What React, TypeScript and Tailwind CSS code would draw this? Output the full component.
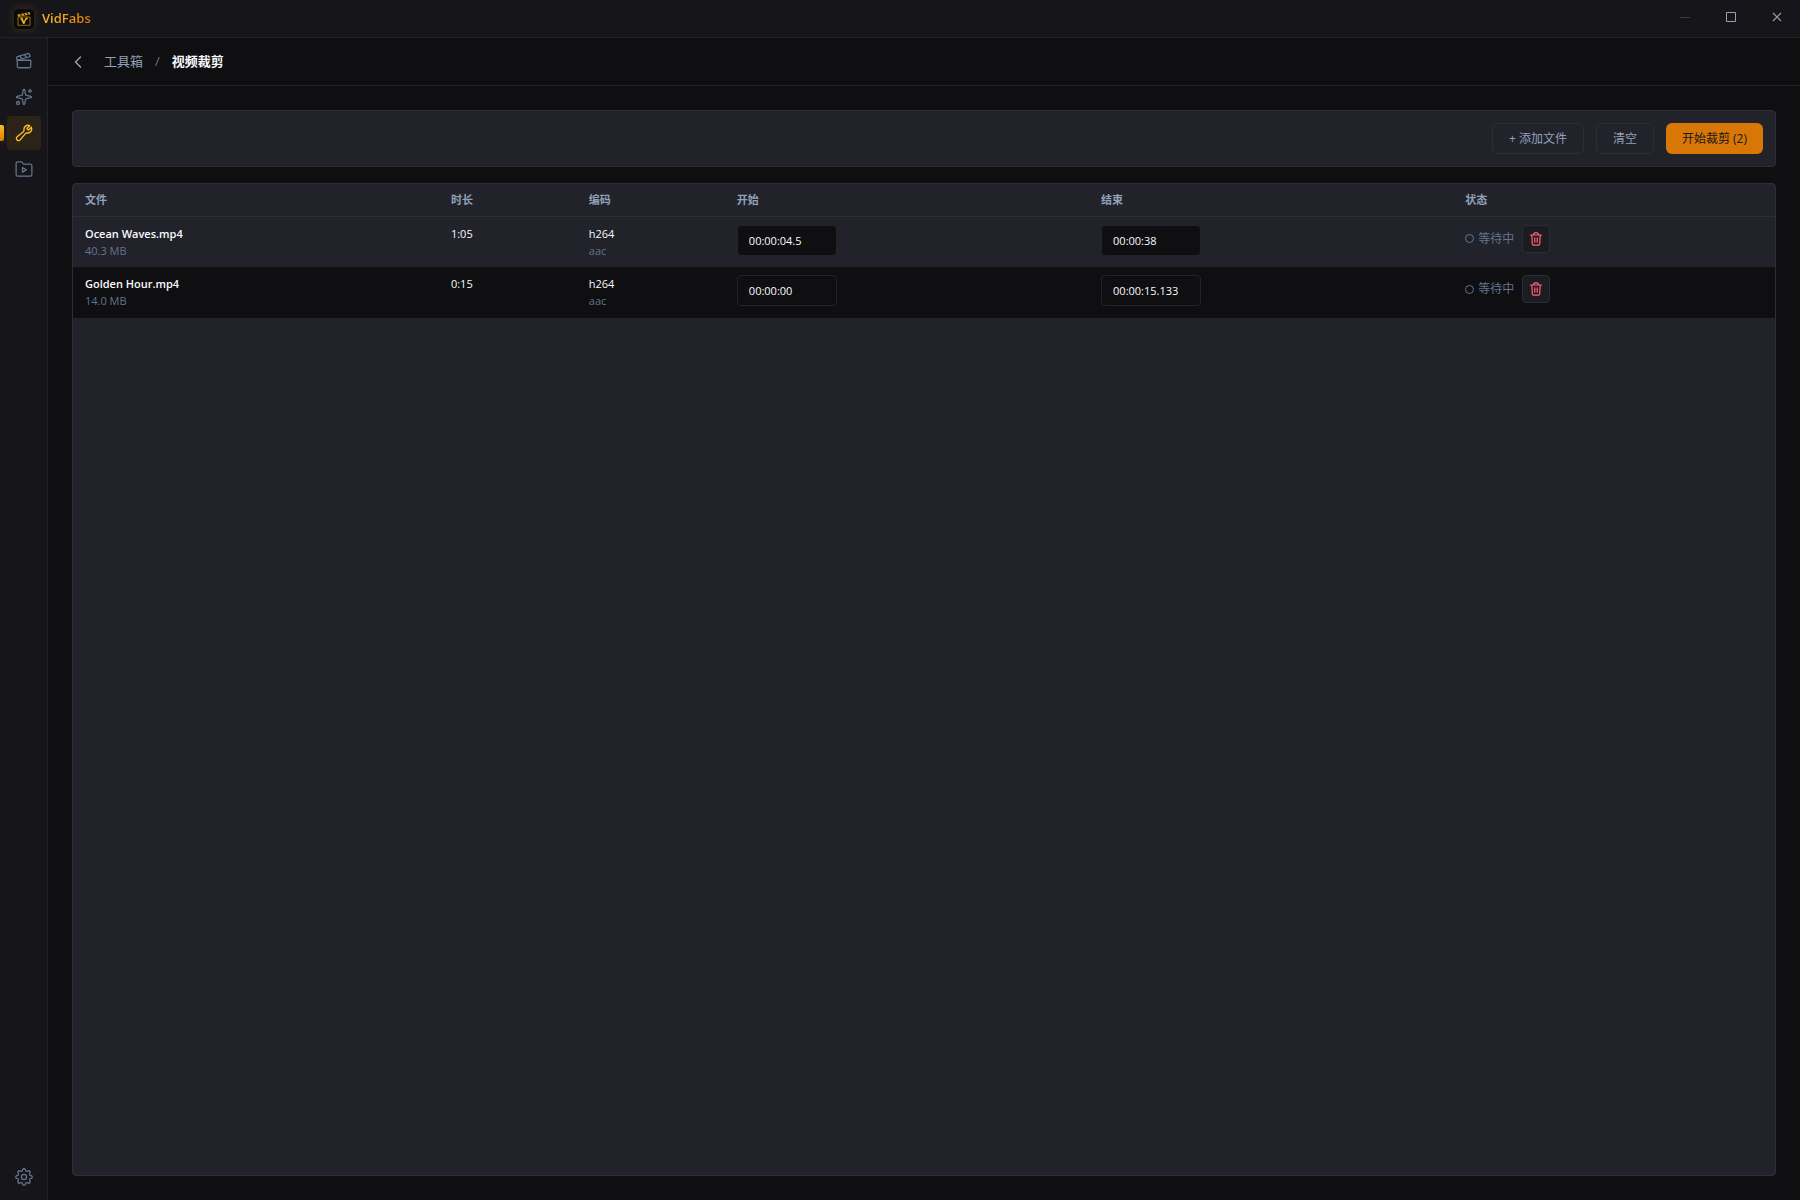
import React from 'react';
import { ChevronLeft, Clapperboard, Sparkles } from 'lucide-react';

type VideoFile = {
    id: number;
    name: string;
    size: string;
    duration: string;
    videoCodec: string;
    audioCodec: string;
    start: string;
    end: string;
};

const files: VideoFile[] = [
    { id: 1, name: 'Ocean Waves.mp4', size: '40.3 MB', duration: '1:05', videoCodec: 'h264', audioCodec: 'aac', start: '00:00:04.5', end: '00:00:38' },
    { id: 2, name: 'Golden Hour.mp4', size: '14.0 MB', duration: '0:15', videoCodec: 'h264', audioCodec: 'aac', start: '00:00:00', end: '00:00:15.133' },
];

const Logo = () => (
    <svg width="20" height="20" viewBox="0 0 20 20" fill="none" aria-hidden="true">
        <rect width="20" height="20" rx="5" fill="#0a0a0c" />
        <path d="M3.4 5.6 15.8 3l.5 2.6L4 8z" fill="#c4920f" />
        <path d="m6.5 5 1.2 2.2M9.8 4.3 11 6.5M13 3.6l1.2 2.2" stroke="#0a0a0c" strokeWidth="1" />
        <path d="M4 8h12v8.3H4z" stroke="#8f6a10" strokeWidth="1" />
        <path d="M6 8.8h2.4l1.5 3.4L11.6 8.8H14l-.6 1.6h-1.2L10.4 15H9.2z" fill="#eab308" />
    </svg>
);

const WrenchIcon = () => (
    <svg width="18" height="18" viewBox="0 0 24 24" fill="none" stroke="currentColor" strokeWidth="1.8" strokeLinecap="round" strokeLinejoin="round" aria-hidden="true">
        <path d="M22.3 6.6a5.4 5.4 0 0 1-6.2 5.4c-1-.1-1.7.1-2.3.8l-6.9 8.4a2.9 2.9 0 1 1-4.1-4.1l8.4-6.9c.7-.6.9-1.3.8-2.3a5.4 5.4 0 0 1 7.6-5.7l-3.7 3.7a3 3 0 0 0 2.2 2.2l3.7-3.7c.3.7.5 1.4.5 2.2z" />
    </svg>
);

const FolderPlayIcon = () => (
    <svg width="18" height="18" viewBox="0 0 24 24" fill="none" stroke="currentColor" strokeWidth="1.7" strokeLinecap="round" strokeLinejoin="round" aria-hidden="true">
        <path d="M1.5 4.5a2 2 0 0 1 2-2h4.6a2 2 0 0 1 1.6.8l1 1.4a2 2 0 0 0 1.6.8h8.2a2 2 0 0 1 2 2v12a2 2 0 0 1-2 2h-17a2 2 0 0 1-2-2z" />
        <path d="m10 10 5 3.2-5 3.2z" />
    </svg>
);

const GearIcon = () => (
    <svg width="18" height="18" viewBox="0 0 24 24" fill="none" stroke="currentColor" strokeWidth="1.7" strokeLinejoin="round" aria-hidden="true">
        <path d="M10.3 2.2a1.8 1.8 0 0 1 3.4 0l.4 1.2a1.8 1.8 0 0 0 2.5 1l1.1-.5a1.8 1.8 0 0 1 2.4 2.4l-.5 1.1a1.8 1.8 0 0 0 1 2.5l1.2.4a1.8 1.8 0 0 1 0 3.4l-1.2.4a1.8 1.8 0 0 0-1 2.5l.5 1.1a1.8 1.8 0 0 1-2.4 2.4l-1.1-.5a1.8 1.8 0 0 0-2.5 1l-.4 1.2a1.8 1.8 0 0 1-3.4 0l-.4-1.2a1.8 1.8 0 0 0-2.5-1l-1.1.5a1.8 1.8 0 0 1-2.4-2.4l.5-1.1a1.8 1.8 0 0 0-1-2.5l-1.2-.4a1.8 1.8 0 0 1 0-3.4l1.2-.4a1.8 1.8 0 0 0 1-2.5l-.5-1.1a1.8 1.8 0 0 1 2.4-2.4l1.1.5a1.8 1.8 0 0 0 2.5-1z" />
        <circle cx="12" cy="12" r="3.4" />
    </svg>
);

const TrashIcon = () => (
    <svg width="14" height="14" viewBox="0 0 14 14" fill="none" stroke="currentColor" strokeWidth="1.2" strokeLinecap="round" strokeLinejoin="round" aria-hidden="true">
        <path d="M1.4 3h11.2M4.8 3V1.8a1 1 0 0 1 1-1h2.4a1 1 0 0 1 1 1V3M2.8 3.2l.5 8.6a1.4 1.4 0 0 0 1.4 1.3h4.6a1.4 1.4 0 0 0 1.4-1.3l.5-8.6M5.8 5.8v4.4M8.2 5.8v4.4" />
    </svg>
);

type NavButtonProps = {
    label: string;
    active?: boolean;
    children: React.ReactNode;
};

const NavButton: React.FC<NavButtonProps> = (props) => (
    <button
        aria-label={props.label}
        className={props.active
            ? 'relative flex size-[34px] items-center justify-center rounded bg-[#2c2318] text-[#fbbf24]'
            : 'flex size-[34px] items-center justify-center rounded text-slate-500'}
    >
        {props.active && <span className="absolute -left-[7px] top-[9px] h-4 w-1 rounded-r-xs bg-linear-to-b from-[#fbbf24] to-[#d97706] shadow-[0_0_8px_rgba(245,158,11,0.2)]" />}
        {props.children}
    </button>
);

const FileRow: React.FC<{ file: VideoFile }> = ({ file }) => {
    const input = 'block h-[31px] w-[100px] rounded border border-[#232329] bg-[#0f0f11] px-[11px] text-[11px] text-slate-50 outline-none';

    return (
        <tr className="h-[51px] even:bg-[#0f0f11]">
            <td className="px-3 pt-2 align-top">
                <div className="text-[11px] leading-[18px] font-semibold text-slate-50">{file.name}</div>
                <div className="text-[11px] leading-4 text-slate-500">{file.size}</div>
            </td>
            <td className="px-3 pt-2 align-top text-[11px] leading-[18px] text-slate-50">{file.duration}</td>
            <td className="px-3 pt-2 align-top">
                <div className="text-[11px] leading-[18px] text-slate-50">{file.videoCodec}</div>
                <div className="text-[11px] leading-4 text-slate-500">{file.audioCodec}</div>
            </td>
            <td className="px-3 pt-2 align-top">
                <input aria-label="开始" defaultValue={file.start} className={input} />
            </td>
            <td className="px-3 pt-2 align-top">
                <input aria-label="结束" defaultValue={file.end} className={input} />
            </td>
            <td className="px-3 pt-2 align-top">
                <div className="flex items-center gap-2">
                    <span className="flex items-center gap-1 text-xs text-slate-500">
                        <span className="size-[9px] rounded-full border border-slate-500" />
                        等待中
                    </span>
                    <button aria-label="删除" className="flex size-7 items-center justify-center rounded border border-[#2c2c34] bg-[#1b1b20] text-rose-400">
                        <TrashIcon />
                    </button>
                </div>
            </td>
        </tr>
    );
};

const App: React.FC = () => {
    const th = 'px-3 text-left font-semibold';
    const secondary = 'h-[31px] rounded-md border border-[#2e2e37] px-4 text-slate-400';

    return (
        <div className="flex h-screen flex-col bg-[#0f0f11] font-['Open_Sans','Noto_Sans_CJK_SC',sans-serif] text-slate-50">
            <header className="flex h-[38px] shrink-0 items-center justify-between border-b border-[#222227] bg-[#16161a]">
                <div className="flex items-center gap-2 pl-[14px]">
                    <span className="rounded shadow-[0_0_8px_rgba(245,158,11,0.2)]"><Logo /></span>
                    <span className="bg-linear-to-r from-[#fbbf24] to-[#d97706] bg-clip-text text-[13px] font-semibold text-transparent">VidFabs</span>
                </div>
                <div className="flex h-full text-slate-400">
                    <button aria-label="最小化" className="flex w-[46px] items-center justify-center pb-1 text-[#3a3a43]">
                        <svg width="10" height="10" viewBox="0 0 10 10" stroke="currentColor"><path d="M0 5.5h10" /></svg>
                    </button>
                    <button aria-label="最大化" className="flex w-[46px] items-center justify-center pb-1">
                        <svg width="10" height="10" viewBox="0 0 10 10" fill="none" stroke="currentColor"><path d="M.5.5h9v9h-9z" /></svg>
                    </button>
                    <button aria-label="关闭" className="flex w-[46px] items-center justify-center pb-1">
                        <svg width="10" height="10" viewBox="0 0 10 10" stroke="currentColor" strokeWidth="1.2"><path d="m1 1 8 8M9 1 1 9" /></svg>
                    </button>
                </div>
            </header>

            <div className="flex min-h-0 flex-1">
                <nav className="flex w-12 shrink-0 flex-col items-center justify-between border-r border-[#222227] bg-[#16161a] py-1.5">
                    <div className="flex flex-col gap-0.5">
                        <NavButton label="视频"><Clapperboard size={18} strokeWidth={1.7} /></NavButton>
                        <NavButton label="AI"><Sparkles size={18} strokeWidth={1.7} /></NavButton>
                        <NavButton label="工具箱" active><WrenchIcon /></NavButton>
                        <NavButton label="媒体库"><FolderPlayIcon /></NavButton>
                    </div>
                    <NavButton label="设置"><GearIcon /></NavButton>
                </nav>

                <main className="flex min-w-0 flex-1 flex-col">
                    <div className="flex h-12 shrink-0 items-center border-b border-[#222227] pl-5 text-[13px]">
                        <button aria-label="返回" className="text-slate-400"><ChevronLeft size={20} strokeWidth={1.8} /></button>
                        <a href="#" className="ml-4 text-slate-400">工具箱</a>
                        <span className="mx-3 text-slate-500">/</span>
                        <span className="font-bold">视频裁剪</span>
                    </div>

                    <div className="flex min-h-0 flex-1 flex-col gap-4 p-6">
                        <div className="flex shrink-0 items-center justify-end gap-3 rounded border border-[#2e2e37] bg-[#22222a] p-3 text-xs">
                            <button className={secondary}>+ 添加文件</button>
                            <button className={secondary}>清空</button>
                            <button className="h-[31px] rounded-md bg-[#d97706] px-4 text-[#16161a]">开始裁剪 (2)</button>
                        </div>

                        <div className="min-h-0 flex-1 overflow-hidden rounded border border-[#2e2e37] bg-[#22222a]">
                            <table className="w-full table-fixed border-collapse">
                                <thead>
                                    <tr className="h-8 border-b border-[#2e2e37] text-[11px] text-slate-400">
                                        <th className={`${th} w-[21.5%]`}>文件</th>
                                        <th className={`${th} w-[8.1%]`}>时长</th>
                                        <th className={`${th} w-[8.7%]`}>编码</th>
                                        <th className={`${th} w-[21.4%]`}>开始</th>
                                        <th className={`${th} w-[21.4%]`}>结束</th>
                                        <th className={th}>状态</th>
                                    </tr>
                                </thead>
                                <tbody>
                                    {files.map((file) => <FileRow key={file.id} file={file} />)}
                                </tbody>
                            </table>
                        </div>
                    </div>
                </main>
            </div>
        </div>
    );
}

export default App;
